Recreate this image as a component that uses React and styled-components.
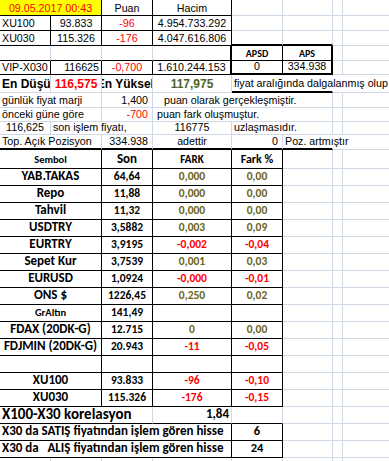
import React from 'react';
import styled, { createGlobalStyle } from 'styled-components';

const GRIDLINE = '#d0d7e5';
const RED = '#ff0000';
const OLIVE = '#6b6314';
const MOSS = '#4f6228';

const ARIAL = '"Liberation Sans", Arial, sans-serif';
const CALI = 'Carlito, Lato, "Open Sans", sans-serif';

const line = (v) => {
  switch (v) {
    case 'thick':
      return '2px solid #000';
    case 'thin':
      return '1px solid #000';
    case 'none':
      return '1px solid transparent';
    default:
      return `1px solid ${GRIDLINE}`;
  }
};

const GlobalStyle = createGlobalStyle`
  html, body { margin: 0; padding: 0; background: #fff; }
  body { overflow: hidden; }
`;

const Sheet = styled.div`
  display: grid;
  grid-template-columns: 51px 51px 51px 79px 51px 50px 10px 60px;
  grid-template-rows: 16px 15px 15px 15px 14px 18px 15px 14px 13px 15px 19px repeat(18, 17px);
  width: 389px;
  height: 461px;
  overflow: hidden;
  background: #fff;
`;

const Cell = styled.div`
  grid-column: span ${(p) => p.$span || 1};
  box-sizing: border-box;
  min-width: 0;
  display: flex;
  align-items: flex-end;
  justify-content: ${(p) => ({ center: 'center', right: 'flex-end' }[p.$align] || 'flex-start')};
  padding: 0 ${(p) => p.$pr ?? 2}px ${(p) => p.$pb ?? 1}px ${(p) => p.$pl ?? 2}px;
  border-right: ${(p) => line(p.$r)};
  border-bottom: ${(p) => line(p.$b)};
  background: ${(p) => p.$bg || 'transparent'};
  color: ${(p) => p.$color || '#000'};
  overflow: ${(p) => (p.$spill ? 'visible' : 'hidden')};
  white-space: pre;
  line-height: 1;
`;

const SheetText = styled(Cell)`
  font-family: ${ARIAL};
  font-size: 10.7px;
`;

const StrongText = styled(Cell)`
  font-family: ${ARIAL};
  font-size: 12px;
  font-weight: 700;
  padding-bottom: 2px;
`;

const BoxHead = styled(Cell)`
  font-family: ${CALI};
  font-size: 10px;
  font-weight: 700;
`;

const HeadCell = styled(Cell)`
  font-family: ${CALI};
  font-size: ${(p) => p.$size || 12}px;
  font-weight: 700;
  padding-bottom: 3px;
`;

const LabelCell = styled(Cell)`
  font-family: ${CALI};
  font-size: ${(p) => p.$size || 13}px;
  font-weight: 700;
  padding-bottom: 3px;
`;

const FigureCell = styled(Cell)`
  font-family: ${CALI};
  font-size: ${(p) => p.$size || 11.5}px;
  font-weight: 700;
  padding-bottom: 3px;
`;

const TitleCell = styled(Cell)`
  font-family: ${CALI};
  font-size: 15px;
  font-weight: 700;
  padding-bottom: 1px;
`;

const KINDS = {
  text: SheetText,
  strong: StrongText,
  box: BoxHead,
  head: HeadCell,
  label: LabelCell,
  num: FigureCell,
  title: TitleCell,
};

const tone = (v) => (v.startsWith('-') ? RED : OLIVE);

const tableRow = ([label, son, fark, pct], size) => [
  { kind: 'label', span: 2, t: label, align: 'center', r: 'thin', b: 'thin', size },
  { kind: 'num', t: son, align: 'center', r: 'thin', b: 'thin' },
  { kind: 'num', t: fark, align: 'center', r: 'thin', b: 'thin', color: tone(fark) },
  { kind: 'num', t: pct, align: 'center', r: 'thin', b: 'thin', color: tone(pct) },
  {},
  {},
  {},
];

const boxed = { r: 'thin', b: 'thin' };

const ROWS = [
  [
    { span: 2, t: '09.05.2017 00:43', bg: '#ffff00', color: RED, align: 'center', ...boxed },
    { t: 'Puan', align: 'center', ...boxed },
    { t: 'Hacim', align: 'center', ...boxed },
    {},
    {},
    {},
    {},
  ],
  [
    { t: 'XU100', ...boxed },
    { t: '93.833', align: 'center', ...boxed },
    { t: '-96', align: 'center', color: RED, ...boxed },
    { t: '4.954.733.292', align: 'center', ...boxed },
    {},
    {},
    {},
    {},
  ],
  [
    { t: 'XU030', ...boxed },
    { t: '115.326', align: 'center', ...boxed },
    { t: '-176', align: 'center', color: RED, ...boxed },
    { t: '4.047.616.806', align: 'center', ...boxed },
    { b: 'thick' },
    { b: 'thick' },
    {},
    {},
  ],
  [
    { b: 'thin' },
    { b: 'thin' },
    { b: 'thin' },
    { r: 'thick', b: 'thin' },
    { kind: 'box', t: 'APSD', align: 'center', r: 'thin', b: 'thin' },
    { kind: 'box', t: 'APS', align: 'center', r: 'thick', b: 'thin' },
    {},
    {},
  ],
  [
    { t: 'VIP-X030', ...boxed },
    { t: '116625', align: 'right', ...boxed },
    { t: '-0,700', align: 'center', color: RED, ...boxed },
    { t: '1.610.244.153', align: 'center', r: 'thick', b: 'thin' },
    { t: '0', align: 'center', r: 'thin', b: 'thick' },
    { t: '334.938', align: 'center', r: 'thick', b: 'thick' },
    {},
    {},
  ],
  [
    { kind: 'strong', t: 'En Düşük' },
    { kind: 'strong', t: '116,575', align: 'center', color: RED },
    { kind: 'strong', t: 'En Yüksek', align: 'center' },
    { kind: 'strong', t: '117,975', align: 'center', color: MOSS },
    { span: 2, t: 'fiyat aralığında dalgalanmış olup', spill: true, r: 'none', b: 'thick', pb: 2 },
    { r: 'none' },
    {},
  ],
  [
    { span: 2, t: 'günlük fiyat marji' },
    { t: '1,400', align: 'right', pr: 4 },
    { span: 3, t: 'puan olarak gerçekleşmiştir.', pl: 11 },
    {},
    {},
  ],
  [
    { span: 2, t: 'önceki güne göre' },
    { t: '-700', align: 'right', color: RED, pr: 4 },
    { span: 3, t: 'puan fark oluşmuştur.', pl: 4 },
    {},
    {},
  ],
  [
    { t: '116,625', align: 'center' },
    { span: 2, t: 'son işlem fiyatı,' },
    { t: '116775', align: 'center' },
    { span: 2, t: 'uzlaşmasıdır.' },
    {},
    {},
  ],
  [
    { span: 2, t: 'Top. Açık Pozisyon', b: 'thick' },
    { t: '334.938', align: 'right', b: 'thick', pr: 4 },
    { t: 'adettir', align: 'center', b: 'thick' },
    { t: '0', align: 'right', b: 'thick', pr: 4 },
    { t: 'Poz. artmıştır', spill: true, r: 'none', b: 'thick' },
    { r: 'none' },
    {},
  ],
  [
    { kind: 'head', span: 2, t: 'Sembol', align: 'center', size: 10.5, ...boxed },
    { kind: 'head', t: 'Son', align: 'center', size: 13, ...boxed },
    { kind: 'head', t: 'FARK', align: 'center', size: 11, ...boxed },
    { kind: 'head', t: 'Fark %', align: 'center', size: 12, ...boxed },
    {},
    {},
    {},
  ],
  tableRow(['YAB.TAKAS', '64,64', '0,000', '0,00']),
  tableRow(['Repo', '11,88', '0,000', '0,00']),
  tableRow(['Tahvil', '11,32', '0,000', '0,00']),
  tableRow(['USDTRY', '3,5882', '0,003', '0,09']),
  tableRow(['EURTRY', '3,9195', '-0,002', '-0,04']),
  tableRow(['Sepet Kur', '3,7539', '0,001', '0,03']),
  tableRow(['EURUSD', '1,0924', '-0,000', '-0,01']),
  tableRow(['ONS $', '1226,45', '0,250', '0,02']),
  tableRow(['GrAltın', '141,49', '', ''], 10.5),
  tableRow(['FDAX (20DK-G)', '12.715', '0', '0,00']),
  tableRow(['FDJMIN (20DK-G)', '20.943', '-11', '-0,05']),
  tableRow(['', '', '', '']),
  tableRow(['XU100', '93.833', '-96', '-0,10']),
  tableRow(['XU030', '115.326', '-176', '-0,15']),
  [
    { kind: 'title', span: 3, t: 'X100-X30 korelasyon', spill: true, b: 'thin' },
    { kind: 'num', t: '1,84', align: 'right', size: 13, b: 'thin', pb: 2 },
    { b: 'thin' },
    {},
    {},
    {},
  ],
  [
    { kind: 'label', span: 4, t: 'X30 da SATIŞ fiyatından işlem gören hisse', ...boxed },
    { kind: 'num', t: '6', align: 'center', size: 12.5, ...boxed },
    {},
    {},
    {},
  ],
  [
    { kind: 'label', span: 4, t: 'X30 da   ALIŞ fiyatından işlem gören hisse', ...boxed },
    { kind: 'num', t: '24', align: 'center', size: 12.5, ...boxed },
    {},
    {},
    {},
  ],
  [{}, {}, {}, {}, {}, {}, {}, {}],
];

export default function App() {
  return (
    <>
      <GlobalStyle />
      <Sheet>
        {ROWS.flatMap((row, ri) =>
          row.map((c, ci) => {
            const Kind = KINDS[c.kind || 'text'];
            return (
              <Kind
                key={`${ri}-${ci}`}
                $span={c.span}
                $align={c.align}
                $r={c.r}
                $b={c.b}
                $bg={c.bg}
                $color={c.color}
                $spill={c.spill}
                $size={c.size}
                $pl={c.pl}
                $pr={c.pr}
                $pb={c.pb}
              >
                {c.t || ''}
              </Kind>
            );
          })
        )}
      </Sheet>
    </>
  );
}
